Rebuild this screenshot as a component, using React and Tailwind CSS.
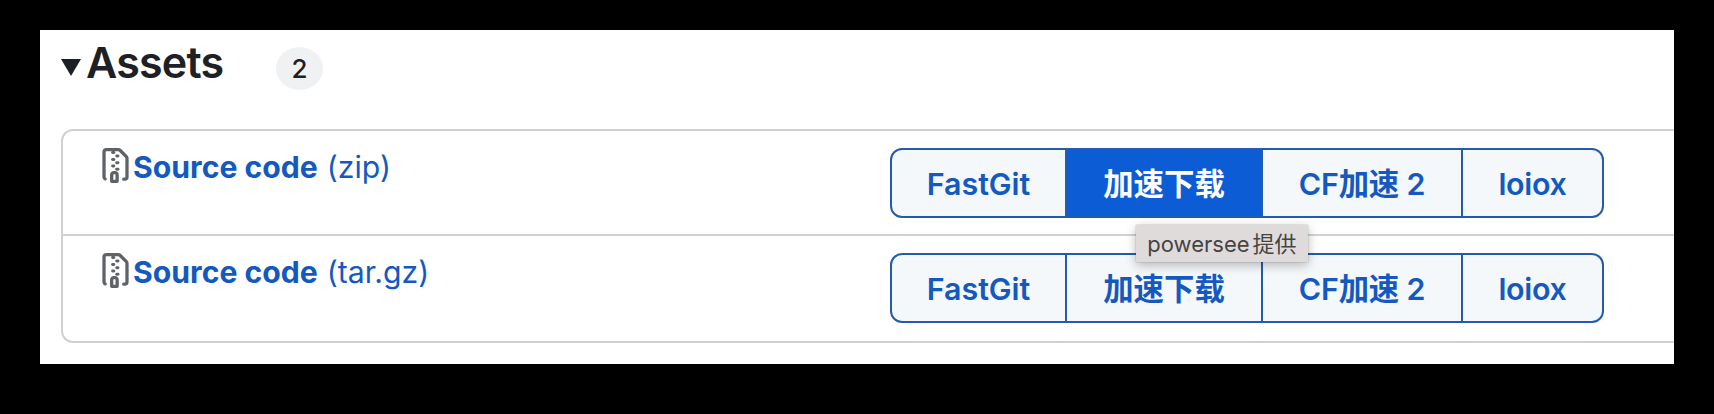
const mirrors = [
  { label: "FastGit", box: "w-[177px] rounded-l-xl", text: "tracking-[-0.05px]" },
  { label: "加速下载", box: "-ml-0.5 w-[198px]", text: "tracking-normal" },
  { label: "CF加速 2", box: "-ml-0.5 w-[202px]", text: "tracking-[-0.2px]" },
  { label: "loiox", box: "-ml-0.5 w-[143px] rounded-r-xl", text: "tracking-[-0.3px]" },
];

const assets = [
  { ext: "(zip)", hovered: "加速下载" },
  { ext: "(tar.gz)", hovered: null },
];

function FileZipIcon() {
  return (
    <svg viewBox="0 0 16 16" className="size-[35px] shrink-0 fill-[#5f6368]" aria-hidden="true">
      <path d="M3.5 1.75v11.5c0 .09.048.173.126.217a.75.75 0 0 1-.752 1.298A1.748 1.748 0 0 1 2 13.25V1.75C2 .784 2.784 0 3.75 0h5.586c.464 0 .909.185 1.237.513l2.914 2.914c.329.328.513.773.513 1.237v8.586A1.75 1.75 0 0 1 12.25 15h-.5a.75.75 0 0 1 0-1.5h.5a.25.25 0 0 0 .25-.25V4.664a.25.25 0 0 0-.073-.177L9.513 1.573a.25.25 0 0 0-.177-.073H3.75a.25.25 0 0 0-.25.25Z" />
      <path
        fillRule="evenodd"
        d="M7.25 10.5h.5c.966 0 1.75.784 1.75 1.75v3a.75.75 0 0 1-.75.75h-2.5a.75.75 0 0 1-.75-.75v-3c0-.966.784-1.75 1.75-1.75Zm0 1.5a.25.25 0 0 0-.25.25v2.25h1v-2.25a.25.25 0 0 0-.25-.25Z"
      />
      {[2.05, 5.25, 8.2].map((y) => (
        <rect key={y} x="6" y={y - 0.68} width="1.9" height="1.36" rx="0.68" />
      ))}
      {[3.7, 6.75, 9.75].map((y) => (
        <rect key={y} x="7.9" y={y - 0.68} width="1.9" height="1.36" rx="0.68" />
      ))}
    </svg>
  );
}

function MirrorButton({ mirror, active }) {
  return (
    <div
      className={`relative flex h-[70px] items-center justify-center border-2 border-[#235cac] pt-[2px] ${mirror.box} ${
        active ? "bg-[#0c5cd6] text-white" : "bg-[#f5f8fa] text-[#1459c0]"
      }`}
    >
      <span className={`whitespace-pre text-[30.4px] leading-none font-semibold ${mirror.text}`}>{mirror.label}</span>
      {active && (
        <div className="absolute top-[75px] left-[69px] z-10 flex h-[37px] w-[172px] items-center justify-center gap-[3px] bg-[#e0dbdb] pt-px text-[22px] whitespace-nowrap text-[#474343] shadow-[0_3px_10px_rgba(0,0,0,0.28),0_0_1px_rgba(0,0,0,0.4)]">
          <span>powersee</span>
          <span>提供</span>
        </div>
      )}
    </div>
  );
}

function AssetRow({ asset, first }) {
  return (
    <li className={`flex justify-between pt-[17px] pr-[70px] pl-[35px] ${first ? "h-[103px]" : "h-[109px] border-t-2 border-[#d0d3d5]"}`}>
      <div className="flex items-start text-[30.2px] leading-[37px] text-[#1459c0]">
        <FileZipIcon />
        <a className="mt-px font-[650]">Source code</a>
        <span className="mt-px ml-[9px]">{asset.ext}</span>
      </div>
      <div className="flex">
        {mirrors.map((m) => (
          <MirrorButton key={m.label} mirror={m} active={m.label === asset.hovered} />
        ))}
      </div>
    </li>
  );
}

export default function App() {
  return (
    <div className="h-[414px] w-[1714px] bg-black px-10 py-[30px] font-['Inter','Noto_Sans_CJK_SC',sans-serif]">
      <main className="h-[334px] overflow-hidden bg-white pt-[11px] pl-[21px]">
        <header className="flex h-[88px] items-start text-[#1d2024]">
          <svg viewBox="0 0 20 17" className="mt-[18px] h-[17px] w-5 fill-current" aria-hidden="true">
            <path d="M0 0h20L10 17Z" />
          </svg>
          <h3 className="ml-[5px] w-[190px] text-[43px] leading-[43px] font-semibold tracking-[-0.8px]">Assets</h3>
          <span className="mt-[6px] flex h-[43px] w-[47px] items-center justify-center rounded-[50%] bg-[#eff1f3] text-[26px] leading-none font-medium">2</span>
        </header>
        <ul className="h-[214px] rounded-l-xl border-2 border-r-0 border-[#cfd1d2]">
          {assets.map((asset, i) => (
            <AssetRow key={asset.ext} asset={asset} first={i === 0} />
          ))}
        </ul>
      </main>
    </div>
  );
}
